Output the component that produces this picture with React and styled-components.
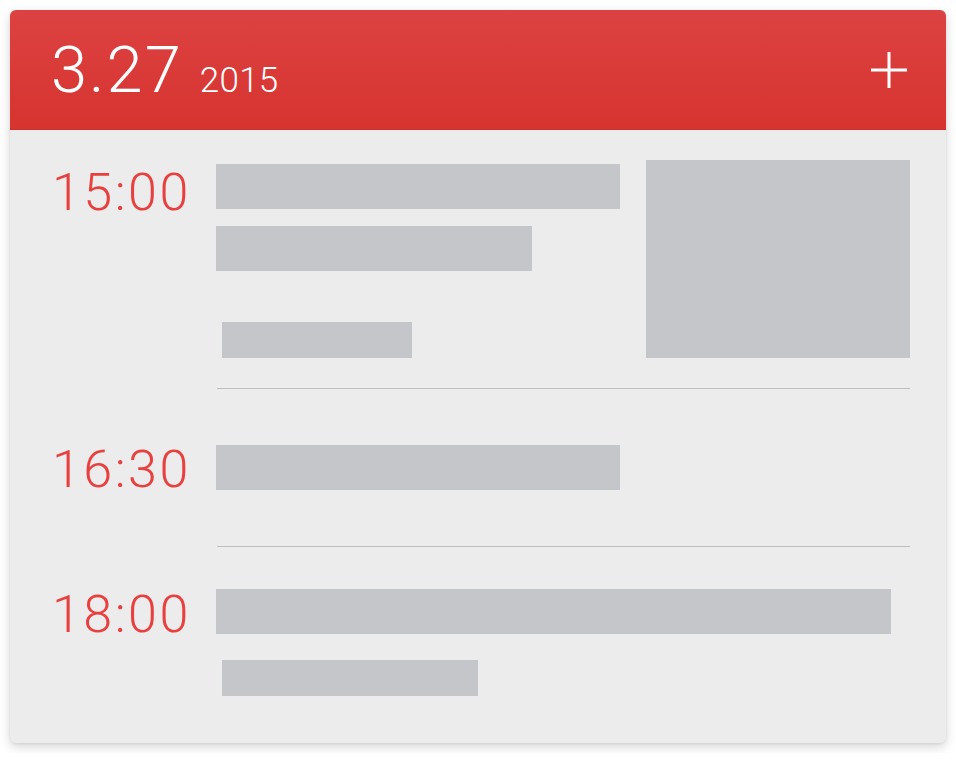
import React from "react";
import styled, { createGlobalStyle } from "styled-components";

const Global = createGlobalStyle`
  html, body { margin: 0; padding: 0; background: #ffffff; }
  body { font-family: Roboto, "Liberation Sans", sans-serif; }
  #root { padding: 10px; }
`;

const Card = styled.div`
  width: 936px;
  background: #ebeceb;
  border-radius: 6px;
  box-shadow: 0 4px 12px rgba(0, 0, 0, 0.16), 0 1px 3px rgba(0, 0, 0, 0.08);
  overflow: hidden;
`;

const Header = styled.header`
  height: 120px;
  box-sizing: border-box;
  padding: 0 39px 0 41px;
  display: flex;
  align-items: center;
  justify-content: space-between;
  background: linear-gradient(to bottom, #dc4242, #d7342f);
  border-bottom: 1px solid #c92f2b;
`;

const DateGroup = styled.div`
  display: flex;
  align-items: baseline;
  color: #ffffff;
  font-weight: 300;
  margin-top: 2px;
`;

const Day = styled.span`
  font-size: 65px;
  line-height: 1;
  letter-spacing: 2px;
`;

const Year = styled.span`
  font-size: 35px;
  line-height: 1;
  letter-spacing: 0.3px;
  margin-left: 17px;
`;

const AddButton = styled.button`
  border: 0;
  padding: 0;
  background: transparent;
  width: 36px;
  height: 36px;
  display: flex;
  cursor: pointer;
`;

const Body = styled.div`
  padding: 0 36px 0 42px;
`;

const Entry = styled.div`
  display: grid;
  grid-template-columns: 164px 1fr;
  padding-top: ${(p) => p.$pt}px;
  padding-bottom: ${(p) => p.$pb}px;
`;

const Time = styled.div`
  height: 45px;
  font-size: 52px;
  line-height: 52px;
  font-weight: 300;
  letter-spacing: 2.5px;
  color: #e8403e;
  white-space: nowrap;
  margin-top: ${(p) => p.$offset}px;
`;

const Content = styled.div`
  display: flex;
  justify-content: space-between;
  align-items: flex-start;
`;

const Lines = styled.div`
  display: flex;
  flex-direction: column;
  align-items: flex-start;
`;

const Bar = styled.div`
  background: #c5c6ca;
  width: ${(p) => p.$w}px;
  height: ${(p) => p.$h || 45}px;
  margin-top: ${(p) => p.$mt || 0}px;
  margin-left: ${(p) => p.$ml || 0}px;
`;

const Thumb = styled.div`
  width: 264px;
  height: 198px;
  background: #c5c6ca;
`;

const Divider = styled.hr`
  margin: 0 0 0 165px;
  border: 0;
  height: 1px;
  background: #bebebe;
`;

export default function App() {
  return (
    <>
      <Global />
      <Card>
        <Header>
          <DateGroup>
            <Day>3.27</Day>
            <Year>2015</Year>
          </DateGroup>
          <AddButton aria-label="add">
            <svg width="36" height="36" viewBox="0 0 36 36">
              <rect x="16.5" y="0" width="3" height="36" fill="#fff" />
              <rect x="0" y="16.5" width="36" height="3" fill="#fff" />
            </svg>
          </AddButton>
        </Header>
        <Body>
          <Entry $pt={30} $pb={30}>
            <Time $offset={7}>15:00</Time>
            <Content>
              <Lines>
                <Bar $w={404} $mt={4} />
                <Bar $w={316} $mt={17} />
                <Bar $w={190} $h={36} $mt={51} $ml={6} />
              </Lines>
              <Thumb />
            </Content>
          </Entry>
          <Divider />
          <Entry $pt={56} $pb={56}>
            <Time $offset={-1}>16:30</Time>
            <Content>
              <Lines>
                <Bar $w={404} />
              </Lines>
            </Content>
          </Entry>
          <Divider />
          <Entry $pt={42} $pb={47}>
            <Time $offset={0}>18:00</Time>
            <Content>
              <Lines>
                <Bar $w={675} />
                <Bar $w={256} $h={36} $mt={26} $ml={6} />
              </Lines>
            </Content>
          </Entry>
        </Body>
      </Card>
    </>
  );
}
